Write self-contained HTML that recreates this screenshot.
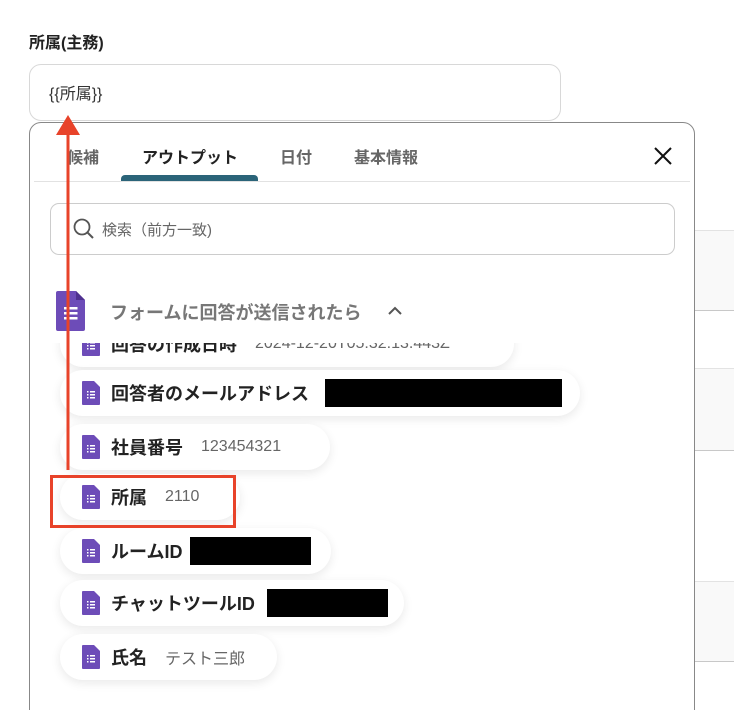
<!DOCTYPE html><html><head><meta charset="utf-8"><style>
*{box-sizing:border-box;margin:0;padding:0}
html,body{width:734px;height:710px;overflow:hidden}
body{background:#fff;position:relative;font-family:"Liberation Sans","Noto Sans CJK JP",sans-serif;color:#222}
.a{position:absolute}
.strip{position:absolute;left:694px;width:40px;background:#f9f9f9;border-top:1px solid #e3e3e3;border-bottom:1px solid #c8c8c8}
.pill{position:absolute;left:60px;height:46px;background:#fff;border-radius:23px;box-shadow:0 3px 10px rgba(0,0,0,.09);display:flex;align-items:center;padding-left:22px;font-size:18px;font-weight:bold;color:#222;white-space:nowrap}
.pill svg{margin-right:11px}
.pill .v{font-weight:normal;color:#666;font-size:16px;margin-left:18px}
.blk{background:#000;height:28px;margin-left:16px}
</style></head><body>
<div class="strip" style="top:230px;height:81px"></div>
<div class="strip" style="top:368px;height:83px"></div>
<div class="strip" style="top:581px;height:81px"></div>
<div class="a" style="left:29px;top:29px;font-size:16px;font-weight:bold">所属(主務)</div>
<div class="a" style="left:29px;top:64px;width:532px;height:57px;border:1px solid #d8d8d8;border-radius:12px;padding:15px 0 0 19px;font-size:16px;color:#333">{{所属}}</div>
<div class="a" style="left:29px;top:122px;width:666px;height:620px;border:1px solid #888;border-radius:12px;background:#fff;overflow:hidden">
 <div class="a" style="left:37px;top:21px;font-size:16px;color:#666;font-weight:bold">候補</div>
 <div class="a" style="left:112px;top:21px;font-size:16px;color:#222;font-weight:bold">アウトプット</div>
 <div class="a" style="left:250px;top:21px;font-size:16px;color:#666;font-weight:bold">日付</div>
 <div class="a" style="left:324px;top:21px;font-size:16px;color:#666;font-weight:bold">基本情報</div>
 <div class="a" style="left:91px;top:52px;width:137px;height:6px;background:#2b6479;border-radius:4px 4px 0 0"></div>
 <div class="a" style="left:4px;top:58px;width:656px;height:1px;background:#e2e2e2"></div>
 <svg class="a" style="left:623px;top:23px" width="20" height="20"><path d="M2 2L18 18M18 2L2 18" stroke="#111" stroke-width="2"/></svg>
 <div class="a" style="left:20px;top:80px;width:625px;height:52px;border:1px solid #ccc;border-radius:9px"></div>
 <svg class="a" style="left:43px;top:95px" width="22" height="22"><circle cx="9" cy="9" r="7.5" fill="none" stroke="#555" stroke-width="1.8"/><path d="M14.5 14.5L20 20" stroke="#555" stroke-width="2"/></svg>
 <div class="a" style="left:72px;top:96px;font-size:15px;color:#666">検索（前方一致)</div>
 <svg class="a" style="left:26px;top:168px" width="29" height="40"><path d="M0 2Q0 0 2 0H20L29 9V38Q29 40 27 40H2Q0 40 0 38Z" fill="#6d4cb8"/><path d="M20 0V9H29Z" fill="#4f3190"/><g fill="#fff"><rect x="8" y="16" width="2.5" height="2.5"/><rect x="8" y="21" width="2.5" height="2.5"/><rect x="8" y="26" width="2.5" height="2.5"/><rect x="12.5" y="16" width="9" height="2.5"/><rect x="12.5" y="21" width="9" height="2.5"/><rect x="12.5" y="26" width="9" height="2.5"/></g></svg>
 <div class="a" style="left:80px;top:176px;font-size:18px;font-weight:bold;color:#777">フォームに回答が送信されたら</div>
 <svg class="a" style="left:358px;top:183px" width="14" height="10"><path d="M1 8L7 2L13 8" fill="none" stroke="#555" stroke-width="2"/></svg>
</div>
<svg width="0" height="0" style="position:absolute"><defs><symbol id="f" viewBox="0 0 18 24"><path d="M0 1Q0 0 1 0H12L18 6V23Q18 24 17 24H1Q0 24 0 23Z" fill="#6d4cb8"/><g fill="#fff"><rect x="5" y="10" width="1.5" height="1.5"/><rect x="5" y="13" width="1.5" height="1.5"/><rect x="5" y="16" width="1.5" height="1.5"/><rect x="8" y="10" width="5" height="1.5"/><rect x="8" y="13" width="5" height="1.5"/><rect x="8" y="16" width="5" height="1.5"/></g></symbol></defs></svg>
<div class="a" style="left:0;top:343px;width:694px;height:367px;overflow:hidden">
 <div class="pill" style="top:-22px;width:454px"><svg width="18" height="24"><use href="#f"/></svg>回答の作成日時<span class="v">2024-12-20T05:32:13.443Z</span></div>
 <div class="pill" style="top:27px;width:520px"><svg width="18" height="24"><use href="#f"/></svg>回答者のメールアドレス<span class="blk" style="width:237px"></span></div>
 <div class="pill" style="top:81px;width:270px"><svg width="18" height="24"><use href="#f"/></svg>社員番号<span class="v">123454321</span></div>
 <div class="pill" style="top:131px;width:180px"><svg width="18" height="24"><use href="#f"/></svg>所属<span class="v">2110</span></div>
 <div class="pill" style="top:185px;width:271px"><svg width="18" height="24"><use href="#f"/></svg>ルームID<span class="blk" style="width:121px;margin-left:8px"></span></div>
 <div class="pill" style="top:237px;width:344px"><svg width="18" height="24"><use href="#f"/></svg>チャットツールID<span class="blk" style="width:121px;margin-left:12px"></span></div>
 <div class="pill" style="top:291px;width:217px"><svg width="18" height="24"><use href="#f"/></svg>氏名<span class="v">テスト三郎</span></div>
</div>
<div class="a" style="left:50px;top:475px;width:186px;height:53px;border:3px solid #e8432a"></div>
<svg class="a" style="left:0;top:0" width="734" height="710"><path d="M68 470V132" stroke="#e8432a" stroke-width="3"/><path d="M56 135L68 115L80 135Z" fill="#e8432a"/></svg>
</body></html>
